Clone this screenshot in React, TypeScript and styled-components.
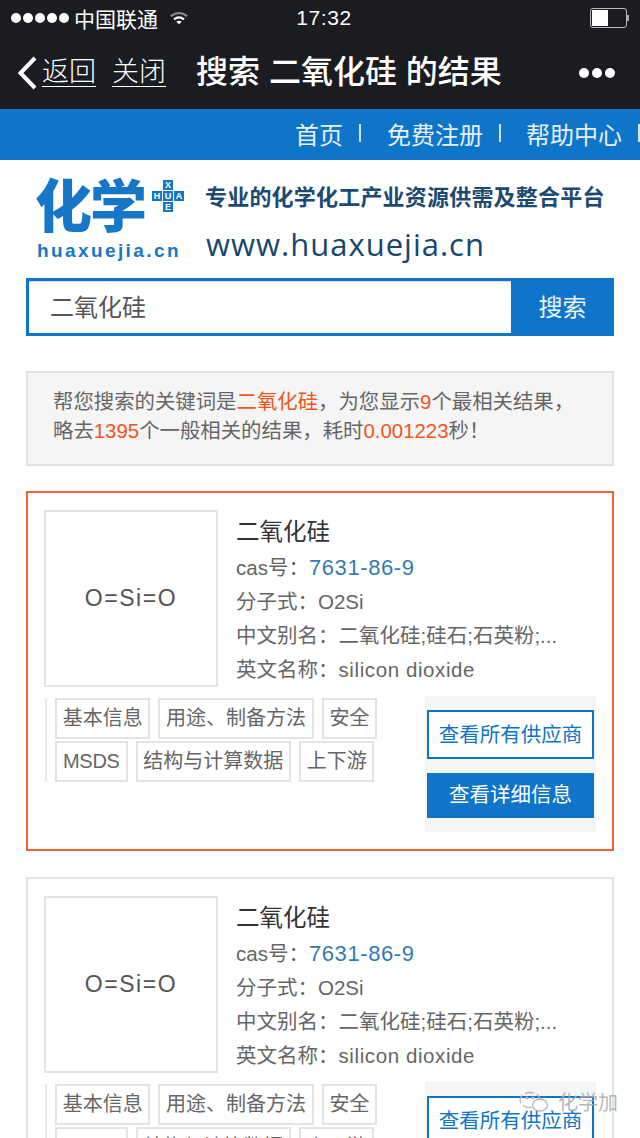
import React from "react";
import styled, { createGlobalStyle } from "styled-components";

const GlobalStyle = createGlobalStyle`
  html, body {
    margin: 0;
    padding: 0;
    background: #fff;
  }
  body {
    width: 640px;
    height: 1138px;
    overflow: hidden;
    font-family: "Liberation Sans", "Noto Sans CJK SC", sans-serif;
    color: #666;
  }
  * { box-sizing: border-box; }
`;

const Page = styled.div`
  position: relative;
  width: 640px;
  height: 1138px;
  overflow: hidden;
`;

const Header = styled.header`
  height: 109px;
  background: #1b1c21;
  color: #fff;
`;

const StatusBar = styled.div`
  height: 36px;
  display: grid;
  grid-template-columns: 1fr auto 1fr;
  align-items: center;
  padding: 0 11px 0 11px;
`;

const StatusLeft = styled.div`
  display: flex;
  align-items: center;
  font-size: 21px;
`;

const Dots = styled.div`
  display: flex;
  gap: 2px;
  margin-right: 5px;
`;

const Dot = styled.span`
  width: 10px;
  height: 10px;
  border-radius: 50%;
  background: #fff;
`;

const Carrier = styled.span`
  margin-right: 11px;
`;

const Clock = styled.div`
  font-size: 21px;
  letter-spacing: 0.6px;
  margin-left: 8px;
`;

const Battery = styled.div`
  justify-self: end;
  display: flex;
  align-items: center;
`;

const BatteryBody = styled.div`
  width: 37px;
  height: 20px;
  border: 1px solid #bbb;
  border-radius: 3px;
  padding: 1px;
`;

const BatteryFill = styled.div`
  width: 16px;
  height: 100%;
  background: #fff;
`;

const BatteryTip = styled.div`
  width: 2px;
  height: 6px;
  background: #aaa;
`;

const NavBar = styled.nav`
  height: 73px;
  display: flex;
  align-items: center;
  padding: 0 25px 0 17px;
`;

const BackLink = styled.a`
  display: flex;
  align-items: center;
  gap: 4px;
  margin-right: 16px;
`;

const NavLink = styled.span`
  font-size: 27px;
  line-height: 27px;
  font-weight: 300;
  white-space: nowrap;
  border-bottom: 1px solid #fff;
`;

const NavTitle = styled.h1`
  margin: 0 0 2px 30px;
  font-size: 32px;
  line-height: 40px;
  font-weight: 500;
  white-space: nowrap;
  flex: 1;
`;

const MoreDots = styled.div`
  display: flex;
  gap: 3px;
`;

const MoreDot = styled.span`
  width: 10px;
  height: 10px;
  border-radius: 50%;
  background: #fff;
`;

const BlueBar = styled.div`
  height: 51px;
  padding-bottom: 3px;
  background: #0e75c9;
  display: flex;
  align-items: center;
  justify-content: flex-end;
  color: #e6f1fa;
  font-size: 24px;
  white-space: nowrap;
`;

const BlueLink = styled.span<{ $gap: number }>`
  margin-left: ${(p) => p.$gap}px;
`;

const BlueDivider = styled.span`
  width: 2px;
  height: 18px;
  margin-left: 16px;
  background: #cfe3f4;
`;

const Brand = styled.div`
  height: 118px;
  padding: 16px 0 0 35px;
  display: flex;
`;

const LogoBlock = styled.div`
  width: 170px;
  flex-shrink: 0;
  display: flex;
  flex-direction: column;
`;

const LogoTop = styled.div`
  display: flex;
  align-items: flex-start;
  height: 62px;
`;

const LogoWord = styled.div`
  font-size: 57px;
  line-height: 62px;
  font-weight: 900;
  color: #1677c9;
  letter-spacing: -2px;
  white-space: nowrap;
`;

const LogoCross = styled.div`
  margin: 4px 0 0 7px;
  display: grid;
  grid-template-columns: repeat(3, 10px);
  grid-auto-rows: 10px;
  gap: 1px;
`;

const CrossCell = styled.span<{ $col: number; $row: number }>`
  grid-column: ${(p) => p.$col};
  grid-row: ${(p) => p.$row};
  background: #1677c9;
  color: #fff;
  font-size: 9px;
  line-height: 10px;
  font-weight: 700;
  text-align: center;
`;

const LogoDomain = styled.div`
  margin: 1px 0 0 2px;
  font-family: "Liberation Sans", sans-serif;
  font-size: 19px;
  line-height: 24px;
  font-weight: 700;
  letter-spacing: 2.4px;
  color: #1677c9;
  white-space: nowrap;
`;

const Slogan = styled.div`
  padding-top: 6px;
`;

const SloganText = styled.div`
  font-size: 22px;
  line-height: 32px;
  font-weight: 700;
  letter-spacing: 0.2px;
  color: #1d4a70;
  white-space: nowrap;
`;

const SloganUrl = styled.div`
  margin: 10px 0 0 1px;
  font-family: "Open Sans", sans-serif;
  font-size: 31px;
  line-height: 40px;
  letter-spacing: 1px;
  color: #17466e;
  white-space: nowrap;
`;

const SearchForm = styled.div`
  margin: 0 26px;
  height: 58px;
  display: flex;
  background: #0e75c9;
  padding: 3px 0 3px 3px;
`;

const SearchInput = styled.div`
  width: 482px;
  background: #fff;
  font-size: 24px;
  line-height: 54px;
  height: 52px;
  padding-left: 21px;
  color: #555;
  box-shadow: inset 0 1px 2px rgba(0, 0, 0, 0.15);
`;

const SearchButton = styled.div`
  flex: 1;
  text-align: center;
  color: #eaf3fb;
  font-size: 24px;
  line-height: 54px;
`;

const Notice = styled.div`
  margin: 35px 26px 25px;
  height: 95px;
  padding: 15px 25px 0;
  background: #f5f5f5;
  border: 2px solid #e2e2e2;
  font-size: 20.4px;
  line-height: 29px;
  color: #666;
  white-space: nowrap;
`;

const Hot = styled.span`
  color: #f0561d;
`;

const Card = styled.article<{ $active?: boolean }>`
  margin: 0 26px 26px;
  height: 360px;
  padding: 17px 16px;
  border: 2px solid ${(p) => (p.$active ? "#ee6236" : "#e2e2e2")};
`;

const CardTop = styled.div`
  display: flex;
  height: 177px;
`;

const Thumb = styled.div`
  width: 174px;
  height: 177px;
  flex-shrink: 0;
  border: 2px solid #e4e4e4;
  display: flex;
  align-items: center;
  justify-content: center;
  font-size: 23px;
  color: #555;
  letter-spacing: 1.6px;
`;

const Info = styled.div`
  margin-left: 18px;
  padding-top: 3px;
  min-width: 0;
  flex: 1;
`;

const InfoTitle = styled.h2`
  margin: 0;
  font-size: 23.5px;
  line-height: 38px;
  font-weight: 400;
  color: #333;
`;

const InfoRow = styled.div`
  font-size: 20.5px;
  line-height: 34px;
  color: #666;
  white-space: nowrap;
`;

const CasLink = styled.a`
  color: #337ab7;
  font-size: 22px;
  letter-spacing: 0.6px;
`;

const EnglishName = styled.span`
  letter-spacing: 0.6px;
`;

const CardBottom = styled.div`
  margin-top: 9px;
  display: flex;
  justify-content: space-between;
  align-items: flex-start;
`;

const Tags = styled.div`
  margin: 2px 0 0 1px;
  width: 345px;
  height: 84px;
  padding-left: 8px;
  border-left: 2px solid #e8e8e8;
  display: flex;
  flex-wrap: wrap;
  align-content: flex-start;
  gap: 2px 8px;
`;

const Tag = styled.span<{ $latin?: boolean }>`
  height: 41px;
  padding: 0 ${(p) => (p.$latin ? 6 : 5.7)}px;
  border: 2px solid #e4e4e4;
  font-size: 20px;
  line-height: 37px;
  letter-spacing: ${(p) => (p.$latin ? "-0.3px" : "0")};
  color: #666;
  white-space: nowrap;
`;

const Actions = styled.div`
  width: 171px;
  height: 136px;
  padding: 14px 2px;
  background: #f4f5f6;
  display: flex;
  flex-direction: column;
  gap: 14px;
`;

const OutlineButton = styled.div`
  height: 49px;
  background: #fff;
  border: 2px solid #0e75c9;
  color: #0e75c9;
  font-size: 20.5px;
  line-height: 45px;
  text-align: center;
  white-space: nowrap;
`;

const SolidButton = styled.div`
  height: 46px;
  background: #0e75c9;
  color: #fff;
  font-size: 20.5px;
  line-height: 44px;
  text-align: center;
  white-space: nowrap;
`;

const Watermark = styled.div`
  position: absolute;
  right: 22px;
  bottom: 22px;
  display: flex;
  align-items: center;
  gap: 9px;
  font-size: 20px;
  color: rgba(170, 170, 170, 0.85);
`;

const tagList = ["基本信息", "用途、制备方法", "安全", "MSDS", "结构与计算数据", "上下游"];

const WifiIcon = () => (
  <svg width="20" height="16" viewBox="0 0 22 16">
    <path d="M2 6 Q11 -1 20 6" fill="none" stroke="#8d8e91" strokeWidth="2.4" />
    <path d="M5.5 9.5 Q11 5 16.5 9.5" fill="none" stroke="#fff" strokeWidth="2.4" />
    <path d="M8 12 Q11 10 14 12 L11 15 Z" fill="#fff" />
  </svg>
);

const BackIcon = () => (
  <svg width="21" height="34" viewBox="0 0 21 34">
    <path d="M18 2 L3.5 17 L18 32" fill="none" stroke="#fff" strokeWidth="4" />
  </svg>
);

const WechatIcon = () => (
  <svg width="30" height="22" viewBox="0 0 30 22" fill="none" stroke="#b5b5b5" strokeWidth="1.3">
    <ellipse cx="11" cy="9" rx="10" ry="7.5" strokeDasharray="9 3" />
    <ellipse cx="21" cy="14" rx="7.5" ry="6" fill="#fff" />
    <circle cx="8" cy="7" r="0.8" fill="#b5b5b5" />
    <circle cx="14" cy="7" r="0.8" fill="#b5b5b5" />
  </svg>
);

const ResultCard = ({ active }: { active?: boolean }) => (
  <Card $active={active}>
    <CardTop>
      <Thumb>O=Si=O</Thumb>
      <Info>
        <InfoTitle>二氧化硅</InfoTitle>
        <InfoRow>
          cas号：<CasLink>7631-86-9</CasLink>
        </InfoRow>
        <InfoRow>分子式：O2Si</InfoRow>
        <InfoRow>中文别名：二氧化硅;硅石;石英粉;...</InfoRow>
        <InfoRow>
          英文名称：<EnglishName>silicon dioxide</EnglishName>
        </InfoRow>
      </Info>
    </CardTop>
    <CardBottom>
      <Tags>
        {tagList.map((t) => (
          <Tag key={t} $latin={t === "MSDS"}>
            {t}
          </Tag>
        ))}
      </Tags>
      <Actions>
        <OutlineButton>查看所有供应商</OutlineButton>
        <SolidButton>查看详细信息</SolidButton>
      </Actions>
    </CardBottom>
  </Card>
);

const App = () => {
  return (
    <Page>
      <GlobalStyle />
      <Header>
        <StatusBar>
          <StatusLeft>
            <Dots>
              {[0, 1, 2, 3, 4].map((i) => (
                <Dot key={i} />
              ))}
            </Dots>
            <Carrier>中国联通</Carrier>
            <WifiIcon />
          </StatusLeft>
          <Clock>17:32</Clock>
          <Battery>
            <BatteryBody>
              <BatteryFill />
            </BatteryBody>
            <BatteryTip />
          </Battery>
        </StatusBar>
        <NavBar>
          <BackLink>
            <BackIcon />
            <NavLink>返回</NavLink>
          </BackLink>
          <NavLink>关闭</NavLink>
          <NavTitle>搜索 二氧化硅 的结果</NavTitle>
          <MoreDots>
            <MoreDot />
            <MoreDot />
            <MoreDot />
          </MoreDots>
        </NavBar>
      </Header>
      <BlueBar>
        <BlueLink $gap={0}>首页</BlueLink>
        <BlueDivider />
        <BlueLink $gap={26}>免费注册</BlueLink>
        <BlueDivider />
        <BlueLink $gap={25}>帮助中心</BlueLink>
        <BlueDivider />
      </BlueBar>
      <Brand>
        <LogoBlock>
          <LogoTop>
            <LogoWord>化学</LogoWord>
            <LogoCross>
              <CrossCell $col={2} $row={1}>X</CrossCell>
              <CrossCell $col={1} $row={2}>H</CrossCell>
              <CrossCell $col={2} $row={2}>U</CrossCell>
              <CrossCell $col={3} $row={2}>A</CrossCell>
              <CrossCell $col={2} $row={3}>E</CrossCell>
            </LogoCross>
          </LogoTop>
          <LogoDomain>huaxuejia.cn</LogoDomain>
        </LogoBlock>
        <Slogan>
          <SloganText>专业的化学化工产业资源供需及整合平台</SloganText>
          <SloganUrl>www.huaxuejia.cn</SloganUrl>
        </Slogan>
      </Brand>
      <SearchForm>
        <SearchInput>二氧化硅</SearchInput>
        <SearchButton>搜索</SearchButton>
      </SearchForm>
      <Notice>
        帮您搜索的关键词是<Hot>二氧化硅</Hot>，为您显示<Hot>9</Hot>个最相关结果，
        <br />
        略去<Hot>1395</Hot>个一般相关的结果，耗时<Hot>0.001223</Hot>秒！
      </Notice>
      <ResultCard active />
      <ResultCard />
      <Watermark>
        <WechatIcon />
        化学加
      </Watermark>
    </Page>
  );
};

export default App;
